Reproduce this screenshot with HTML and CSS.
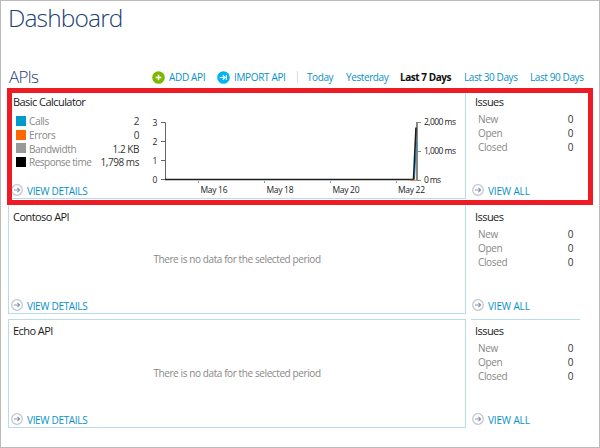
FILE: index.html
```html
<!DOCTYPE html>
<html lang="en">
<head>
<meta charset="utf-8">
<title>Dashboard</title>
<link rel="stylesheet" href="styles.css">
</head>
<body>
<svg class="defs" width="0" height="0">
  <symbol id="go" viewBox="0 0 12 12"><circle cx="6" cy="6" r="5.3" fill="#fff" stroke="#bfc5cf" stroke-width="1.2"/><path d="M3 6h5.6M6.4 3.9L8.7 6 6.4 8.1" fill="none" stroke="#8795a8" stroke-width="1.1"/></symbol>
</svg>
<main class="page">
  <h1>Dashboard</h1>
  <header class="toolbar">
    <h2>APIs</h2>
    <a class="add"><svg width="13" height="13" viewBox="0 0 13 13"><circle cx="6.5" cy="6.5" r="6.3" fill="#7db800"/><path d="M6.5 3.7v5.6M3.7 6.5h5.6" stroke="#fff" stroke-width="1.5"/></svg><span>ADD API</span></a>
    <a class="import"><svg width="13" height="13" viewBox="0 0 13 13"><circle cx="6.5" cy="6.5" r="6.3" fill="#00b4f0"/><path d="M2.7 6.5h5M5.7 4.2L8 6.5 5.7 8.8M9.4 4v5" fill="none" stroke="#fff" stroke-width="1.2"/></svg><span>IMPORT API</span></a>
    <nav class="periods">
      <a class="p-today">Today</a><a class="p-yesterday">Yesterday</a><a class="p-seven active">Last 7 Days</a><a class="p-thirty">Last 30 Days</a><a class="p-ninety">Last 90 Days</a>
    </nav>
  </header>
  <section class="row first">
    <article class="card">
      <h3 class="t-basic">Basic Calculator</h3>
      <dl class="stats">
        <div><i class="calls"></i><dt class="w-calls">Calls</dt><dd>2</dd></div>
        <div><i class="errors"></i><dt class="w-errors">Errors</dt><dd>0</dd></div>
        <div><i class="bandwidth"></i><dt class="w-bandwidth">Bandwidth</dt><dd>1.2 KB</dd></div>
        <div><i class="response"></i><dt class="w-response">Response time</dt><dd>1,798 ms</dd></div>
      </dl>
      <svg class="chart" width="310" height="84" viewBox="150 114 310 84">
        <path d="M161 122.5h4.5v57H161M161 141.5h4.5M161 160.5h4.5" fill="none" stroke="#666"/>
        <path d="M198.500 181v2M264.500 181v2M330.500 181v2M396.500 181v2" stroke="#999"/>
        <path d="M417 122v58" stroke="#888" stroke-width="2"/>
        <path d="M417 122.500h4M417 151.500h4M417 180.500h4" stroke="#888"/>
        <path d="M414.500 179L416.500 141" stroke="#0099cc"/>
        <path d="M165 179.500H413.500L416 127.500" fill="none" stroke="#1c1c1c" stroke-width="1.6"/>
        <path d="M410 180.200h7" stroke="#c96a25"/>
        <g class="left"><text x="155" y="125.500">3</text><text x="155" y="144.500">2</text><text x="155" y="164">1</text><text x="155" y="183">0</text></g>
        <g class="labels">
          <text x="200.500" y="193.300" textLength="27">May 16</text><text x="266.500" y="193.300" textLength="27">May 18</text><text x="332.500" y="193.300" textLength="27">May 20</text><text x="398" y="193.300" textLength="27">May 22</text>
          <text x="424" y="125.300" textLength="32">2,000 ms</text><text x="424" y="154" textLength="32">1,000 ms</text><text x="424" y="183" textLength="17">0 ms</text>
        </g>
      </svg>
      <a class="more"><svg width="12" height="12"><use href="#go"/></svg><span>VIEW DETAILS</span></a>
    </article>
    <aside class="issues">
      <h3>Issues</h3>
      <dl><div><dt>New</dt><dd>0</dd></div><div><dt>Open</dt><dd>0</dd></div><div><dt>Closed</dt><dd>0</dd></div></dl>
      <a class="more"><svg width="12" height="12"><use href="#go"/></svg><span>VIEW ALL</span></a>
    </aside>
    <div class="highlight"></div>
  </section>
  <section class="row second">
    <article class="card">
      <h3>Contoso API</h3>
      <p>There is no data for the selected period</p>
      <a class="more"><svg width="12" height="12"><use href="#go"/></svg><span>VIEW DETAILS</span></a>
    </article>
    <aside class="issues">
      <h3>Issues</h3>
      <dl><div><dt>New</dt><dd>0</dd></div><div><dt>Open</dt><dd>0</dd></div><div><dt>Closed</dt><dd>0</dd></div></dl>
      <a class="more"><svg width="12" height="12"><use href="#go"/></svg><span>VIEW ALL</span></a>
    </aside>
  </section>
  <section class="row">
    <article class="card">
      <h3>Echo API</h3>
      <p>There is no data for the selected period</p>
      <a class="more"><svg width="12" height="12"><use href="#go"/></svg><span>VIEW DETAILS</span></a>
    </article>
    <aside class="issues">
      <h3>Issues</h3>
      <dl><div><dt>New</dt><dd>0</dd></div><div><dt>Open</dt><dd>0</dd></div><div><dt>Closed</dt><dd>0</dd></div></dl>
      <a class="more"><svg width="12" height="12"><use href="#go"/></svg><span>VIEW ALL</span></a>
    </aside>
  </section>
</main>
</body>
</html>
```
FILE: styles.css
```css
* { box-sizing: border-box; margin: 0; padding: 0; }
body { font: 10px/14px "Open Sans", "Noto Sans", sans-serif; color: #333; background: #fff; }
.defs { display: none; }
svg { display: block; flex: none; }
a { color: #0791c8; display: flex; align-items: center; white-space: nowrap; }
.page { width: 600px; height: 448px; border: 1px solid #bbb; padding: 0 0 0 7px; overflow: hidden; }
h1 { font-size: 24.5px; line-height: 34px; height: 64px; font-weight: 300; color: #1c4274; letter-spacing: -.85px; }
h2 { font-size: 17px; line-height: 22px; font-weight: 300; color: #1c4274; width: 144px; letter-spacing: -.8px; padding-left: 1px; }
.toolbar { display: flex; align-items: center; height: 24px; }
.toolbar a span { margin-left: 4px; letter-spacing: -.35px; }
.add { width: 65px; }
.import { width: 80px; }
.periods { display: flex; align-items: center; border-left: 1px solid #ddd; height: 12px; padding-left: 9px; }
.periods a { letter-spacing: -.4px; }
.p-today { width: 39px; }
.p-yesterday { width: 54px; }
.p-seven { width: 64px; }
.p-thirty { width: 66px; }
.periods .active { font-weight: 700; color: #111; letter-spacing: -.45px; }
.row { display: flex; gap: 5px; height: 109px; margin-bottom: 5px; position: relative; }
.first { margin-top: 1px; margin-bottom: 6px; }
.card { width: 458px; height: 109px; border: 1px solid #b9dcea; display: grid; grid-template: 21px 68px 1fr / 145px 1fr; }
.second .card, .second .issues { border-top-color: transparent; }
h3 { font-size: 11px; line-height: 14px; font-weight: 400; color: #1a1a1a; padding: 4px 0 0 4px; letter-spacing: -.55px; grid-column: 1 / -1; white-space: nowrap; }
.stats { padding: 2px 0 0 7px; width: 130px; }
.stats div { display: flex; align-items: center; height: 13.8px; }
.stats i { width: 10px; height: 10px; margin-right: 3px; }
.calls { background: #0099cc; }
.errors { background: #ff6600; }
.bandwidth { background: #999; }
.response { background: #000; }
dt { color: #888; flex: 1; white-space: nowrap; letter-spacing: -.35px; }
.w-response { letter-spacing: -.5px; }
dd { letter-spacing: -.45px; }
.chart { grid-column: 2; grid-row: 2 / 4; margin: 2px 0 0 -4px; }
.chart text { font-size: 8.5px; fill: #222; }
.left { text-anchor: middle; }
.card p { grid-column: 1 / -1; text-align: center; line-height: 14px; padding: 25px 0 0; color: #888; letter-spacing: -.4px; }
.more { grid-column: 1; grid-row: 3; height: 14px; margin-top: 3px; padding-left: 2px; }
.more span { margin-left: 4px; padding-top: 1px; letter-spacing: -.33px; }
.issues { width: 109px; height: 109px; border-top: 1px solid #b9dcea; }
.issues dl { height: 68px; padding: 0 7px 0 7px; }
.issues dl div { display: flex; height: 13.8px; align-items: center; }
.issues .more { padding-left: 1px; }
.issues .more span { letter-spacing: -.15px; }
.issues h3 { height: 21px; }
.highlight { position: absolute; left: -1px; top: -2px; width: 586px; height: 117px; border: 5px solid #ed1c24; }
```
